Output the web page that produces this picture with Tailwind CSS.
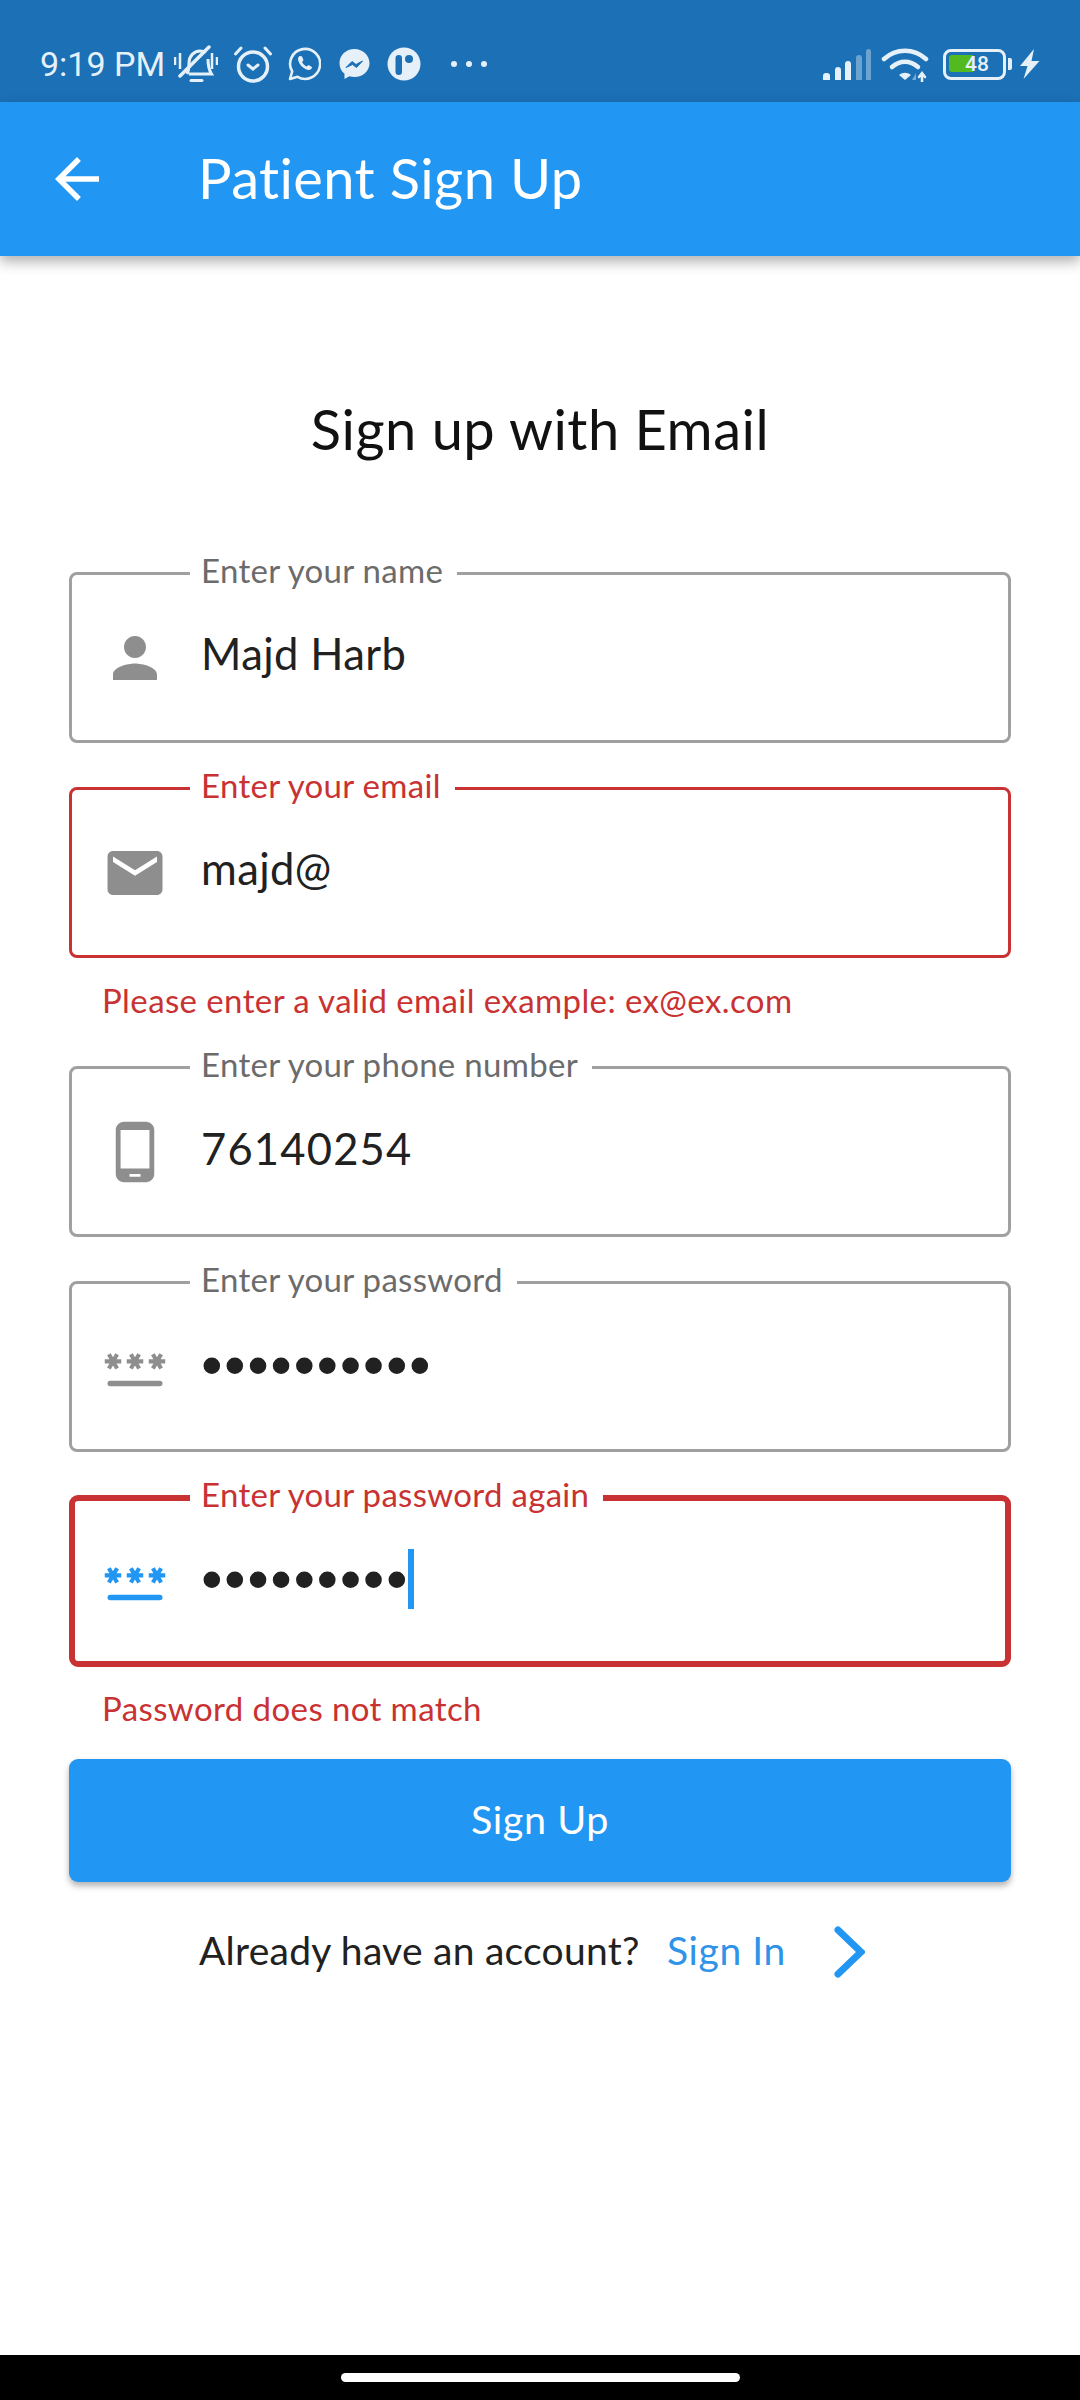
<!DOCTYPE html>
<html lang="en">
<head>
    <meta charset="UTF-8">
    <meta name="viewport" content="width=device-width, initial-scale=1.0">
    <title>Patient Sign Up</title>
    <script src="https://cdn.jsdelivr.net/npm/@tailwindcss/browser@4"></script>
</head>
<body class="bg-white font-['Lato',sans-serif]">
    <div class="flex flex-col h-[2400px] w-[1080px] overflow-hidden">

        <!-- status bar -->
        <div class="h-[102px] shrink-0 bg-[#1b70b6] text-[#e6f0f8] flex items-center pl-[40px] pr-[40px] pt-[26px]">
            <span class="font-['Roboto',sans-serif] text-[34px] leading-[40px] w-[134px] whitespace-nowrap">9:19 PM</span>
            <svg class="w-[44px] h-[38px]" viewBox="0 0 44 38" fill="none" stroke="#e6f0f8" stroke-width="3">
                <path d="M1 12v8M6 8v16M38 8v16M43 12v8" stroke-width="2.500"/>
                <path d="M13 29c1.500-3 2-6 2-11 0-7 5-12 11-12 2 0 4 .5 5.500 2M34 14c0 6 1 11 3.500 15H15"/>
                <path d="M6 31 35 2" stroke-linecap="round" stroke-width="3.500"/>
                <path d="M17 35.500h11" stroke-linecap="round"/>
            </svg>
            <svg class="w-[40px] h-[38px] ml-[15px]" viewBox="0 0 40 38" fill="none" stroke="#e6f0f8" stroke-width="3.500" stroke-linecap="round">
                <circle cx="20" cy="21.500" r="14.500"/>
                <path d="M15 20l5 4 5-4" stroke-width="3"/>
                <path d="M2.500 9 8 3M37.500 9 32 3" stroke-width="3"/>
            </svg>
            <svg class="w-[33px] h-[34px] ml-[15px]" viewBox="0 0 33 34" fill="none">
                <path d="M2 32l2.200-7.500A15 15 0 1 1 9.500 29.800z" stroke="#e6f0f8" stroke-width="2.600" stroke-linejoin="round"/>
                <path d="M11.500 9c-2 1.500-2 4 0 7.500 2.500 4 6 6 8.500 6.500 2 .3 4-1 4-3l-3.500-2-1.800 1.500c-2-1-3.600-2.600-4.600-4.600l1.400-1.800-1.600-3.800z" fill="#e6f0f8"/>
            </svg>
            <svg class="w-[31px] h-[32px] ml-[18px]" viewBox="0 0 31 32">
                <path d="M15.500 1C7 1 .5 7.200.5 15.200c0 4.300 1.900 8 5 10.500V31l4.800-2.700c1.600.5 3.400.7 5.200.7 8.500 0 15-6.200 15-13.800S24 1 15.500 1z" fill="#e6f0f8"/>
                <path d="M7 19.500l6-6 4 3 6.500-3.500-6 6.500-4-3z" fill="#1b70b6" stroke="#1b70b6" stroke-width="1"/>
            </svg>
            <svg class="w-[34px] h-[34px] ml-[17px]" viewBox="0 0 33 34">
                <circle cx="16.500" cy="17" r="16.500" fill="#e6f0f8"/>
                <rect x="8" y="8" width="6.500" height="20" rx="3.250" fill="#1b70b6"/>
                <circle cx="21.500" cy="12" r="4" fill="#1b70b6"/>
            </svg>
            <div class="flex gap-[9px] ml-[30px]">
                <span class="w-[6px] h-[6px] rounded-full bg-[#e6f0f8]"></span>
                <span class="w-[6px] h-[6px] rounded-full bg-[#e6f0f8]"></span>
                <span class="w-[6px] h-[6px] rounded-full bg-[#e6f0f8]"></span>
            </div>

            <div class="ml-auto flex items-center">
                <!-- signal -->
                <div class="flex items-end gap-[4.500px] h-[31px]">
                    <span class="w-[7px] h-[7px] rounded-t-[3px] bg-[#e6f0f8]"></span>
                    <span class="w-[6px] h-[13px] rounded-t-[3px] bg-[#e6f0f8]"></span>
                    <span class="w-[6px] h-[19px] rounded-t-[3px] bg-[#e6f0f8]"></span>
                    <span class="w-[6px] h-[25px] rounded-t-[3px] bg-[#e6f0f8]/40"></span>
                    <span class="w-[5px] h-[31px] rounded-t-[3px] bg-[#e6f0f8]/40"></span>
                </div>
                <svg class="w-[48px] h-[36px] ml-[10px]" viewBox="0 0 48 36" fill="none" stroke-linecap="round">
                    <path d="M3 13C15 2 33 2 45 13" stroke="#e6f0f8" stroke-width="4.500"/>
                    <path d="M11 21c8-7 18-7 26 0" stroke="#e6f0f8" stroke-width="4.500"/>
                    <path d="M18 29c4-3 8-3 12 0l-6 5z" fill="#e6f0f8"/>
                    <path d="M35 27v7h-4z" fill="#e6f0f8" fill-opacity=".45"/>
                    <path d="M41 36v-8M38 31l3-4 3 4" stroke="#e6f0f8" stroke-width="2.500"/>
                </svg>
                <!-- battery -->
                <div class="relative w-[63px] h-[31px] ml-[14px] rounded-[8px] border-[3.500px] border-[#e6f0f8]">
                    <span class="absolute left-[3px] top-[3px] w-[24px] h-[17px] rounded-l-[3px] bg-[#52b91f]"></span>
                    <span class="absolute inset-0 flex items-center justify-center pl-[5px] font-['Roboto',sans-serif] font-medium text-[21px] leading-[24px] text-[#e6f0f8]">48</span>
                </div>
                <span class="w-[4px] h-[12px] ml-[2px] rounded-r-[2px] bg-[#e6f0f8]"></span>
                <svg class="w-[20px] h-[30px] ml-[8px]" viewBox="0 0 20 30">
                    <path d="M14 0 0 17h7.500L3.500 30 19.500 12H11.500z" fill="#e6f0f8"/>
                </svg>
            </div>
        </div>

        <!-- app bar -->
        <div class="h-[154px] shrink-0 bg-[#2196f3] flex items-center shadow-[0_6px_12px_rgba(0,0,0,0.3)] relative">
            <svg class="w-[66px] h-[66px] ml-[44px]" viewBox="0 0 24 24" fill="#ffffff">
                <path d="M20 11H7.830l5.590-5.590L12 4l-8 8 8 8 1.410-1.410L7.830 13H20v-2z"/>
            </svg>
            <h1 class="ml-[88px] -mt-[3px] text-[56px] tracking-[0.4px] leading-[64px] text-white">Patient Sign Up</h1>
        </div>

        <!-- form -->
        <div class="flex-1 flex flex-col pl-[69px] pr-[69px] pt-[143px]">
            <h2 class="text-center text-[56px] tracking-[0.5px] leading-[60px] text-[#111111]">Sign up with Email</h2>

            <div class="relative h-[171px] mt-[113px] rounded-[8px] border-[3px] border-[#a0a0a0] flex items-center">
                <span class="absolute left-[118px] -top-[25px] pl-[11px] pr-[14px] bg-white text-[33px] tracking-[0.3px] leading-[40px] text-[#6b6b6b] whitespace-nowrap">Enter your name</span>
                <svg class="w-[66px] h-[66px] ml-[30px]" viewBox="0 0 24 24" fill="#8e8e8e">
                    <path d="M12 12c2.210 0 4-1.790 4-4s-1.790-4-4-4-4 1.790-4 4 1.790 4 4 4zm0 2c-2.670 0-8 1.340-8 4v2h16v-2c0-2.660-5.330-4-8-4z"/>
                </svg>
                <span class="ml-[33px] -mt-[9px] text-[43.500px] tracking-[0.4px] leading-[52px] text-[#212121]">Majd Harb</span>
            </div>

            <div class="relative h-[171px] mt-[44px] rounded-[8px] border-[3px] border-[#c93232] flex items-center">
                <span class="absolute left-[118px] -top-[25px] pl-[11px] pr-[14px] bg-white text-[33px] tracking-[0.3px] leading-[40px] text-[#c93232] whitespace-nowrap">Enter your email</span>
                <svg class="w-[66px] h-[66px] ml-[30px]" viewBox="0 0 24 24" fill="#8e8e8e">
                    <path d="M20 4H4c-1.100 0-1.990.9-1.990 2L2 18c0 1.100.9 2 2 2h16c1.100 0 2-.9 2-2V6c0-1.100-.9-2-2-2zm0 4l-8 5-8-5V6l8 5 8-5v2z"/>
                </svg>
                <span class="ml-[33px] -mt-[9px] text-[43.500px] tracking-[0.4px] leading-[52px] text-[#212121]">majd@</span>
            </div>
            <p class="mt-[20px] pl-[33px] text-[33px] tracking-[0.4px] leading-[44px] text-[#c93232]">Please enter a valid email example: ex@ex.com</p>

            <div class="relative h-[171px] mt-[44px] rounded-[8px] border-[3px] border-[#a0a0a0] flex items-center">
                <span class="absolute left-[118px] -top-[25px] pl-[11px] pr-[14px] bg-white text-[33px] tracking-[0.3px] leading-[40px] text-[#6b6b6b] whitespace-nowrap">Enter your phone number</span>
                <svg class="w-[66px] h-[66px] ml-[30px]" viewBox="0 0 24 24" fill="#8e8e8e">
                    <path d="M16 1H8C6.340 1 5 2.340 5 4v16c0 1.660 1.340 3 3 3h8c1.660 0 3-1.340 3-3V4c0-1.660-1.340-3-3-3zm-2 20h-4v-1h4v1zm3.250-3H6.750V4h10.500v14z"/>
                </svg>
                <span class="ml-[33px] -mt-[7px] text-[43.500px] tracking-[1.2px] leading-[52px] text-[#212121]">76140254</span>
            </div>

            <div class="relative h-[171px] mt-[44px] rounded-[8px] border-[3px] border-[#a0a0a0] flex items-center">
                <span class="absolute left-[118px] -top-[25px] pl-[11px] pr-[14px] bg-white text-[33px] tracking-[0.3px] leading-[40px] text-[#6b6b6b] whitespace-nowrap">Enter your password</span>
                <svg class="w-[66px] h-[66px] ml-[30px]" viewBox="0 0 24 24" fill="#8e8e8e">
                    <path d="M3 17h18a1 1 0 0 1 0 2H3a1 1 0 0 1 0-2zm.150-4.050L4 11.470l.850 1.480 1.300-.750-.850-1.480H7v-1.500H5.300l.850-1.470L4.850 7 4 8.470 3.150 7l-1.300.750.850 1.470H1v1.500h1.700l-.850 1.480 1.300.750zm6.700-.750l1.300.750.850-1.480.850 1.480 1.300-.750-.850-1.480H15v-1.500h-1.700l.850-1.470-1.300-.750L12 8.470 11.150 7l-1.300.750.850 1.470H9v1.500h1.700l-.850 1.480zM23 9.220h-1.700l.850-1.470-1.300-.750L20 8.470 19.150 7l-1.300.750.850 1.470H17v1.500h1.700l-.850 1.480 1.300.750.850-1.480.850 1.480 1.300-.750-.850-1.480H23v-1.500z"/>
                </svg>
                <span class="ml-[27px] font-['DejaVu_Sans',sans-serif] text-[57px] tracking-[-10.500px] leading-[52px] text-[#212121]">••••••••••</span>
            </div>

            <div class="relative h-[172px] mt-[43px] rounded-[9px] border-[6px] border-[#c93232] flex items-center">
                <span class="absolute left-[115px] -top-[27px] pl-[11px] pr-[14px] bg-white text-[33px] tracking-[0.3px] leading-[40px] text-[#c93232] whitespace-nowrap">Enter your password again</span>
                <svg class="w-[66px] h-[66px] ml-[27px]" viewBox="0 0 24 24" fill="#2196f3">
                    <path d="M3 17h18a1 1 0 0 1 0 2H3a1 1 0 0 1 0-2zm.150-4.050L4 11.470l.850 1.480 1.300-.750-.850-1.480H7v-1.500H5.300l.850-1.470L4.850 7 4 8.470 3.150 7l-1.300.750.850 1.470H1v1.500h1.700l-.850 1.480 1.300.750zm6.700-.750l1.300.750.850-1.480.850 1.480 1.300-.750-.850-1.480H15v-1.500h-1.700l.850-1.470-1.300-.750L12 8.470 11.150 7l-1.300.750.850 1.470H9v1.500h1.700l-.850 1.480zM23 9.220h-1.700l.850-1.470-1.300-.750L20 8.470 19.150 7l-1.300.750.850 1.470H17v1.500h1.700l-.850 1.480 1.300.750.850-1.480.850 1.480 1.300-.750-.850-1.480H23v-1.500z"/>
                </svg>
                <span class="ml-[27px] font-['DejaVu_Sans',sans-serif] text-[57px] tracking-[-10.500px] leading-[52px] text-[#212121]">•••••••••</span>
                <span class="w-[6px] h-[60px] ml-[5px] -mt-[4px] bg-[#2196f3]"></span>
            </div>
            <p class="mt-[19px] pl-[33px] text-[33px] tracking-[0.4px] leading-[44px] text-[#c93232]">Password does not match</p>

            <button class="mt-[29px] h-[123px] pb-[3px] rounded-[9px] bg-[#2196f3] text-white text-[39.500px] tracking-[0.6px] shadow-[0_4px_6px_rgba(0,0,0,0.3)]">Sign Up</button>

            <div class="mt-[40px] h-[60px] flex items-center pl-[130px]">
                <span class="w-[468px] -mt-[3px] text-[39px] tracking-[0.25px] text-[#212121] whitespace-nowrap">Already have an account?</span>
                <span class="w-[167px] -mt-[3px] text-[39px] tracking-[0.6px] text-[#2f93e8] whitespace-nowrap">Sign In</span>
                <svg class="w-[31px] h-[52px]" viewBox="0 0 31 52" fill="none" stroke="#2196f3" stroke-width="7" stroke-linecap="round" stroke-linejoin="miter">
                    <path d="M4 4l23 22-23 22"/>
                </svg>
            </div>
        </div>

        <!-- nav bar -->
        <div class="h-[45px] shrink-0 bg-black flex items-center justify-center">
            <span class="w-[399px] h-[9px] rounded-full bg-white"></span>
        </div>
    </div>
</body>
</html>
